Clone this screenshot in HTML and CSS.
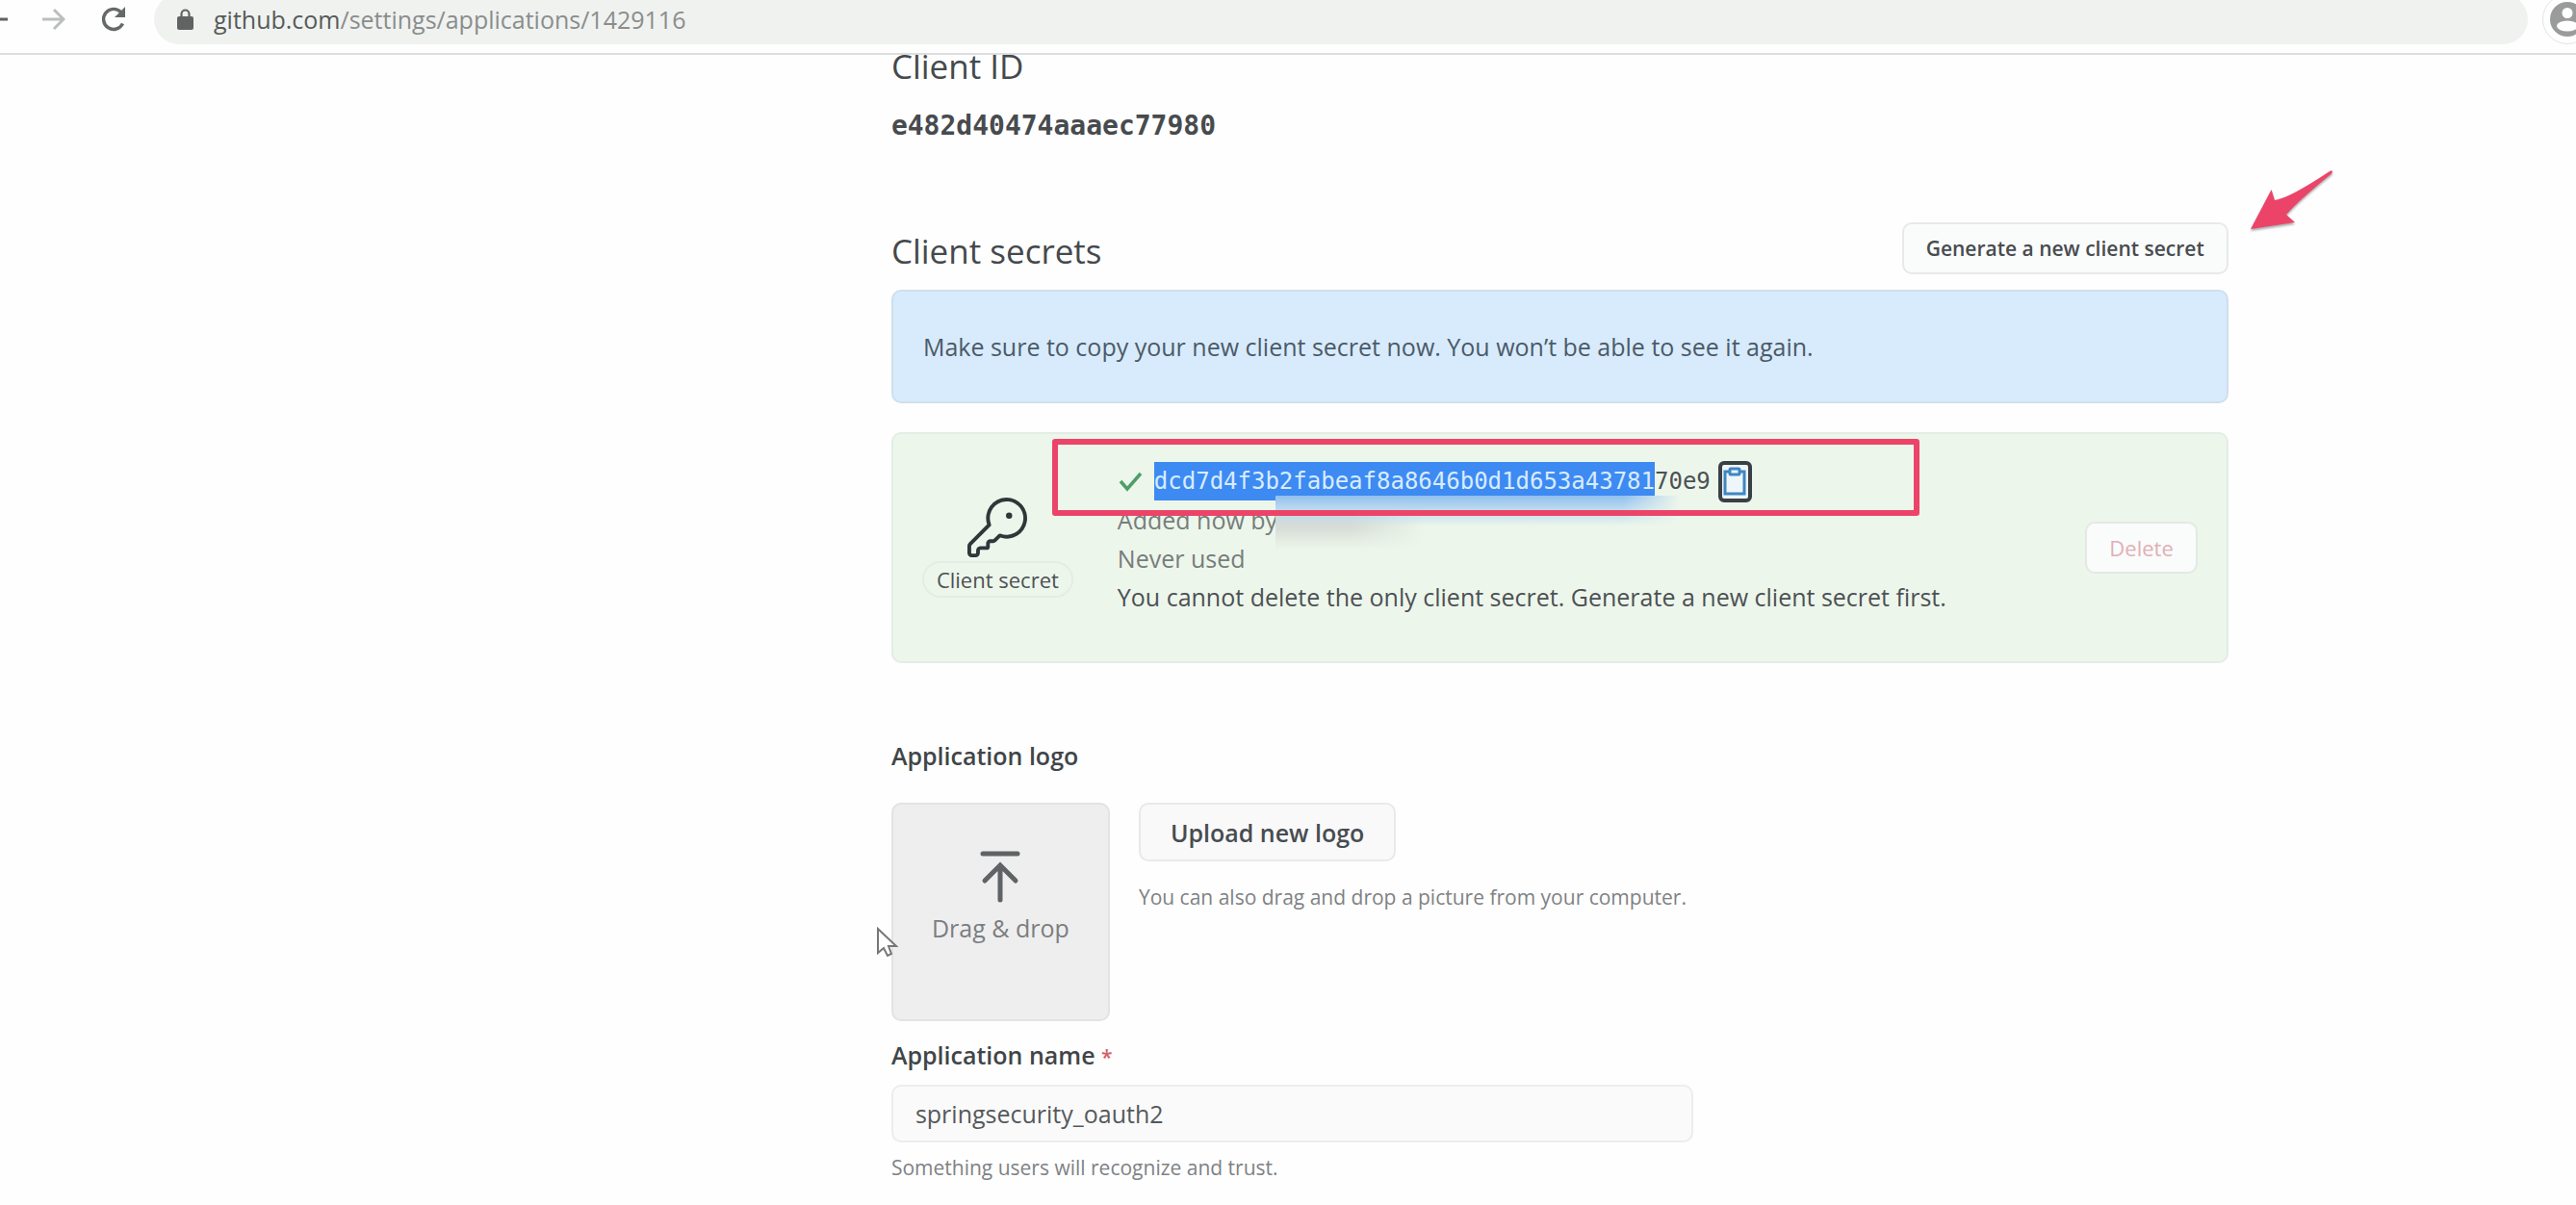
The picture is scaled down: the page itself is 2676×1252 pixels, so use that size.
FILE: index.html
```html
<!DOCTYPE html>
<html lang="en">
<head>
<meta charset="utf-8">
<title>OAuth application settings</title>
<link rel="stylesheet" href="styles.css">
</head>
<body>
<header class="toolbar">
  <button class="nav-button" type="button" aria-label="Back">
    <svg width="8" height="26" viewBox="0 0 8 26" fill="none" stroke="#5f6163" stroke-width="3"><path d="M0 13H8"/></svg>
  </button>
  <button class="nav-button" type="button" aria-label="Forward">
    <svg width="24" height="26" viewBox="0 0 24 26" fill="none" stroke="#bcbebe" stroke-width="3"><path d="M0 13H22M12 3l10 10-10 10"/></svg>
  </button>
  <button class="nav-button" type="button" aria-label="Reload">
    <svg width="28" height="28" viewBox="0 0 28 28"><path d="M23.5 18.500A10.500 10.500 0 1 1 21.500 6.500" fill="none" stroke="#66696a" stroke-width="3.400"/><path d="M26 1v11H15z" fill="#66696a"/></svg>
  </button>
  <div class="address">
    <svg width="17" height="22" viewBox="0 0 17 22"><path d="M4.500 9V5.500a4 4 0 0 1 8 0V9" fill="none" stroke="#5f6361" stroke-width="2.200"/><rect y="8" width="17" height="14" rx="2" fill="#5f6361"/></svg>
    <span class="url"><span class="url-host">github.com</span>/settings/applications/1429116</span>
  </div>
  <button class="avatar" type="button" aria-label="Profile">
    <svg width="36" height="36" viewBox="0 0 36 36"><circle cx="18" cy="18" r="18" fill="#9a9c9b"/><circle cx="18" cy="11.500" r="5.500" fill="#fff"/><ellipse cx="18" cy="25" rx="11" ry="5.500" fill="#fff"/></svg>
  </button>
</header>

<main class="settings">
  <h2 class="heading">Client ID</h2>
  <code class="client-id">e482d40474aaaec77980</code>

  <div class="secrets-head">
    <h2 class="heading">Client secrets</h2>
    <button class="button" type="button">Generate a new client secret</button>
    <svg class="arrow" width="96" height="76" viewBox="0 0 96 76"><path d="M4 66L25.600 25L29 36Q44 34 86 6Q90 4 88.500 8Q54 36 41 51L50 59Z" fill="#ec4469"/></svg>
  </div>

  <p class="notice">Make sure to copy your new client secret now. You won’t be able to see it again.</p>

  <section class="secret">
    <div class="secret-kind">
      <svg width="62" height="62" viewBox="0 0 24 24" fill="#30363a"><path d="M16.750 8.500a1.250 1.250 0 1 0 0-2.500 1.250 1.250 0 0 0 0 2.500z"/><path d="M15.750 0a8.250 8.250 0 0 0-7.851 10.790L.513 18.178A1.750 1.750 0 0 0 0 19.414v2.836C0 23.216.784 24 1.750 24h1.500A1.750 1.750 0 0 0 5 22.250v-1a.25.25 0 0 1 .25-.25h2.735a.75.75 0 0 0 .545-.22l.214-.213A.875.875 0 0 0 9 19.948V18.500a.25.25 0 0 1 .25-.25h1.086c.464 0 .91-.184 1.237-.513l1.636-1.636A8.250 8.250 0 1 0 15.750 0zM9 8.250a6.750 6.750 0 1 1 4.288 6.287.75.75 0 0 0-.804.168l-1.971 1.972a.25.25 0 0 1-.177.073H9.250A1.750 1.750 0 0 0 7.500 18.500v1H5.250a1.750 1.750 0 0 0-1.750 1.750v1a.25.25 0 0 1-.25.25h-1.500a.25.25 0 0 1-.25-.25v-2.836a.25.25 0 0 1 .073-.177l7.722-7.721a.75.75 0 0 0 .168-.804A6.730 6.730 0 0 1 9 8.250z"/></svg>
      <span class="tag">Client secret</span>
    </div>
    <div class="secret-info">
      <div class="secret-value">
        <svg width="26" height="22" viewBox="0 0 26 22" fill="none" stroke="#4d9e68" stroke-width="3.500"><path d="M3 11l7 8L24 3"/></svg>
        <code class="secret-code"><mark class="selected">dcd7d4f3b2fabeaf8a8646b0d1d653a43781</mark>70e9</code>
        <button class="copy" type="button" aria-label="Copy secret">
          <svg width="26" height="32" viewBox="0 0 26 32" fill="none" stroke="#3f86c0" stroke-width="3"><path d="M7 6H3v23h20V6h-4"/><rect x="8" y="3" width="10" height="6" rx="1"/></svg>
        </button>
      </div>
      <p class="added">Added now by <span class="redaction"></span></p>
      <p class="muted">Never used</p>
      <p>You cannot delete the only client secret. Generate a new client secret first.</p>
    </div>
    <button class="button button-danger" type="button" disabled>Delete</button>
    <div class="frame"></div>
  </section>

  <h3 class="label">Application logo</h3>
  <div class="logo-row">
    <div class="drop-zone">
      <svg width="42" height="54" viewBox="0 0 42 54" fill="none" stroke="#606365" stroke-width="5" stroke-linecap="round"><path d="M3 3H39M21 51V16M5 31L21 15L37 31"/></svg>
      <span>Drag &amp; drop</span>
      <svg class="cursor" width="24" height="32" viewBox="0 0 24 32"><path d="M2 2V27L8 22L12 30L16 28L13 20H21Z" fill="#fff" stroke="#777" stroke-width="2"/></svg>
    </div>
    <div class="logo-actions">
      <button class="button button-large" type="button">Upload new logo</button>
      <p class="hint">You can also drag and drop a picture from your computer.</p>
    </div>
  </div>

  <label class="label name-label" for="app-name">Application name <span class="required">*</span></label>
  <input class="field" id="app-name" type="text" value="springsecurity_oauth2">
  <p class="hint">Something users will recognize and trust.</p>
</main>
</body>
</html>
```

FILE: styles.css
```css
* {
  box-sizing: border-box;
}

body {
  margin: 0;
  background: #fefefe;
  color: #4c5154;
  font: 25px/40px "Open Sans", "Noto Sans", sans-serif;
}

h2,
h3,
p {
  margin: 0;
}

svg {
  display: block;
  flex: none;
}

button {
  font: inherit;
}

code {
  font-family: "DejaVu Sans Mono", "Liberation Mono", monospace;
}

/* Browser toolbar */
.toolbar {
  position: relative;
  z-index: 1;
  display: flex;
  align-items: center;
  height: 57px;
  padding-bottom: 15px;
  border-bottom: 2px solid #dcdedd;
  background: #fefefe;
  overflow: hidden;
}

.nav-button {
  margin-right: 36px;
  padding: 0;
  border: 0;
  background: none;
}

.nav-button:nth-child(3) {
  margin-right: 28px;
}

.address {
  display: flex;
  flex: 1;
  align-items: center;
  gap: 21px;
  height: 52px;
  padding: 0 24px;
  border-radius: 26px;
  background: #f0f2f0;
}

.url {
  color: #8a8d8c;
}

.url-host {
  color: #565a59;
}

.avatar {
  display: flex;
  flex: none;
  align-items: center;
  justify-content: center;
  width: 52px;
  height: 52px;
  margin: 0 -17px 0 15px;
  padding: 0;
  border: 1px solid #e3e5e4;
  border-radius: 50%;
  background: #fefefe;
}

/* Settings column */
.settings {
  margin-top: -12px;
  padding: 0 13.5% 20px 34.6%;
}

.heading {
  color: #45494c;
  font-size: 35px;
  font-weight: 400;
  line-height: 48px;
}

.client-id {
  display: block;
  margin-top: 18px;
  color: #474b4e;
  font-size: 28px;
  font-weight: 700;
}

.secrets-head {
  position: relative;
  display: flex;
  align-items: flex-end;
  justify-content: space-between;
  margin-top: 80px;
}

.arrow {
  position: absolute;
  bottom: 37px;
  left: calc(100% + 19px);
  filter: drop-shadow(0 2px 1px #0005);
}

.button {
  height: 54px;
  padding: 0 23px;
  border: 2px solid #e8eae9;
  border-radius: 10px;
  background: #fafbfb;
  color: #484c4f;
  font-size: 21px;
  font-weight: 600;
  line-height: 32px;
}

.button-danger {
  border-color: #e4e9e4;
  color: #dfb0b6;
  font-size: 22px;
  font-weight: 400;
}

.button-large {
  height: 61px;
  padding: 0 31px;
  background: #f9f9fa;
  font-size: 25px;
}

.notice {
  margin-top: 16px;
  padding: 37px 31px;
  border: 2px solid #cfdfec;
  border-radius: 10px;
  background: #d8ebfc;
  color: #4b5a68;
}

/* Secret card */
.secret {
  position: relative;
  display: flex;
  align-items: center;
  margin-top: 30px;
  padding: 29px 30px;
  border: 2px solid #e3ede5;
  border-radius: 10px;
  background: #edf6eb;
}

.secret-kind {
  display: flex;
  flex-direction: column;
  align-items: center;
  gap: 4px;
  margin-right: 46px;
}

.tag {
  padding: 0 13px;
  border: 2px solid #e4ede3;
  border-radius: 20px;
  font-size: 22px;
  line-height: 34px;
}

.secret-info {
  flex: 1;
  margin-bottom: 18px;
}

.secret-value {
  display: flex;
  align-items: center;
  height: 40px;
}

.secret-code {
  margin: 0 8px 0 12px;
  font-size: 24px;
}

.selected {
  display: inline-block;
  background: #3d8af2;
  color: #d8ecff;
}

.copy {
  display: flex;
  flex: none;
  align-items: center;
  justify-content: center;
  width: 35px;
  height: 43px;
  padding: 0;
  border: 4px solid #3a4044;
  border-radius: 6px;
  background: #eef6fb;
}

.added,
.muted {
  color: #777d7b;
}

.added {
  display: flex;
}

/* Smudge over the account name and the lower edge of the selection */
.redaction {
  position: relative;
  width: 420px;
  height: 56px;
  margin: -5px 0 -11px -2px;
  background:
    linear-gradient(90deg, #edf6eb00 86%, #edf6eb) 0 0 / 100% 32px no-repeat,
    linear-gradient(#8fbff0, #b9d8ee 40%, #edf6eb00) 0 0 / 100% 32px no-repeat,
    linear-gradient(90deg, #edf6eb00 50%, #edf6eb) 0 0 / 156px 100% no-repeat,
    linear-gradient(#d6ddd7 60%, #edf6eb) 0 0 / 156px 100% no-repeat,
    #edf6eb;
}

.frame {
  position: absolute;
  top: 5px;
  left: 165px;
  width: 901px;
  height: 80px;
  border: 6px solid #ec4469;
  border-radius: 3px;
}

/* Logo and name */
.label {
  display: block;
  color: #414548;
  font-size: 25px;
  font-weight: 600;
}

h3.label {
  margin-top: 76px;
}

.logo-row {
  display: flex;
  align-items: flex-start;
  gap: 30px;
  margin-top: 29px;
}

.drop-zone {
  position: relative;
  display: flex;
  flex-direction: column;
  align-items: center;
  gap: 6px;
  width: 227px;
  height: 227px;
  padding-top: 48px;
  border: 2px solid #e2e3e3;
  border-radius: 10px;
  background: #eeeeef;
  color: #7b7e80;
}

.cursor {
  position: absolute;
  top: 127px;
  left: -18px;
}

.hint {
  margin-top: 10px;
  color: #7e8284;
  font-size: 21px;
  line-height: 32px;
}

.logo-actions .hint {
  margin-top: 21px;
}

.name-label {
  margin-top: 15px;
}

.required {
  color: #d4606c;
  font-size: 21px;
  line-height: 1;
}

.field {
  display: block;
  width: 60%;
  height: 60px;
  margin-top: 11px;
  padding: 0 23px;
  border: 2px solid #eceded;
  border-radius: 10px;
  background: #fafafa;
  color: #55595c;
  font: inherit;
}
```
